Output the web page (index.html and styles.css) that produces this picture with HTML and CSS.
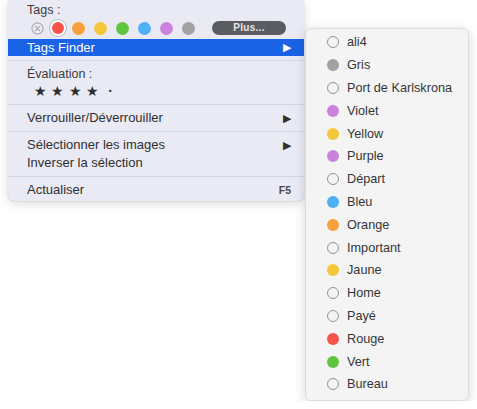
FILE: index.html
```html
<!DOCTYPE html>
<html lang="fr">
<head>
<meta charset="utf-8">
<title>Menu</title>
<link rel="stylesheet" href="styles.css">
</head>
<body>
<div class="stage">
  <div class="menu">
    <div class="label tags-label">Tags :</div>
    <div class="tag-row">
      <span class="clear"><svg width="13" height="13" viewBox="0 0 13 13"><circle cx="6.5" cy="6.5" r="5.6" fill="none" stroke="#a9a9ad" stroke-width="1.1"/><path d="M4.3 4.3 L8.7 8.7 M8.7 4.3 L4.3 8.7" stroke="#a9a9ad" stroke-width="1.1" stroke-linecap="round"/></svg></span>
      <span class="dot sel"><span class="inner red"></span></span>
      <span class="dot orange"></span>
      <span class="dot yellow"></span>
      <span class="dot green"></span>
      <span class="dot blue"></span>
      <span class="dot purple"></span>
      <span class="dot gray"></span>
      <span class="plus">Plus...</span>
    </div>
    <div class="item active"><span>Tags Finder</span><span class="arrow">&#9654;</span></div>
    <div class="sep"></div>
    <div class="label eval">Évaluation :</div>
    <div class="stars"><span>★</span><span>★</span><span>★</span><span>★</span><span class="dotc">·</span></div>
    <div class="sep"></div>
    <div class="item"><span>Verrouiller/Déverrouiller</span><span class="arrow">&#9654;</span></div>
    <div class="sep"></div>
    <div class="item"><span>Sélectionner les images</span><span class="arrow">&#9654;</span></div>
    <div class="item"><span>Inverser la sélection</span></div>
    <div class="sep"></div>
    <div class="item"><span>Actualiser</span><span class="key">F5</span></div>
  </div>
  <div class="submenu">
    <div class="sub"><span class="c ring"></span>ali4</div>
    <div class="sub"><span class="c gray"></span>Gris</div>
    <div class="sub"><span class="c ring"></span>Port de Karlskrona</div>
    <div class="sub"><span class="c purple"></span>Violet</div>
    <div class="sub"><span class="c yellow"></span>Yellow</div>
    <div class="sub"><span class="c purple"></span>Purple</div>
    <div class="sub"><span class="c ring"></span>Départ</div>
    <div class="sub"><span class="c blue"></span>Bleu</div>
    <div class="sub"><span class="c orange"></span>Orange</div>
    <div class="sub"><span class="c ring"></span>Important</div>
    <div class="sub"><span class="c yellow"></span>Jaune</div>
    <div class="sub"><span class="c ring"></span>Home</div>
    <div class="sub"><span class="c ring"></span>Payé</div>
    <div class="sub"><span class="c red"></span>Rouge</div>
    <div class="sub"><span class="c green"></span>Vert</div>
    <div class="sub"><span class="c ring"></span>Bureau</div>
  </div>
</div>
</body>
</html>
```

FILE: styles.css
```css
html, body {
  margin: 0;
  padding: 0;
  background: #ffffff;
}
body {
  font-family: "Liberation Sans", Arial, sans-serif;
  font-size: 13px;
  color: #333333;
}
.stage {
  display: flex;
  align-items: flex-start;
  padding-left: 8px;
  gap: 1px;
}
.menu {
  width: 296px;
  background: #e9eaf4;
  border-radius: 0 0 6px 6px;
  box-shadow: 0 3px 10px rgba(0,0,0,0.14), 0 0 1px rgba(0,0,0,0.25);
  padding-bottom: 2px;
}
.label {
  padding-left: 19px;
  color: #3a3a3c;
  font-size: 12.5px;
}
.tags-label {
  height: 19px;
  line-height: 20px;
}
.tag-row {
  height: 18px;
  display: flex;
  align-items: center;
  padding-left: 23px;
  margin-bottom: 2px;
}
.clear {
  width: 13px;
  height: 13px;
  display: flex;
  margin-right: 7px;
}
.dot {
  width: 13px;
  height: 13px;
  border-radius: 50%;
  margin-right: 9px;
  flex: none;
}
.dot.sel {
  width: 16px;
  height: 16px;
  margin-left: -1px;
  margin-right: 6px;
  background: #ffffff;
  box-shadow: 0 0 0 1px #b9b9c0;
  display: flex;
  align-items: center;
  justify-content: center;
}
.inner {
  width: 12px;
  height: 12px;
  border-radius: 50%;
}
.red { background: #f6534b; }
.orange { background: #f6a13c; }
.yellow { background: #f5c83c; }
.green { background: #5ec53f; }
.blue { background: #4eb1f6; }
.purple { background: #cb82df; }
.gray { background: #a1a1a3; }
.plus {
  margin-left: 8px;
  width: 74px;
  height: 14px;
  border-radius: 7px;
  background: #5b5c61;
  color: #e6e6ea;
  font-size: 10px;
  font-weight: bold;
  line-height: 14px;
  text-align: center;
  letter-spacing: 0.3px;
}
.item {
  height: 18px;
  line-height: 18px;
  padding-left: 19px;
  padding-right: 13px;
  display: flex;
  justify-content: space-between;
  color: #2f2f31;
}
.item.active {
  height: 17px;
  line-height: 17px;
  background: #1a63e6;
  color: #ffffff;
}
.arrow {
  font-size: 11px;
}
.key {
  font-size: 10.5px;
  font-weight: bold;
  color: #4a4a4c;
  padding-right: 0;
}
.sep {
  height: 1px;
  background: #d3d4de;
  margin: 4px 0 4px;
}
.eval {
  height: 18px;
  line-height: 18px;
}
.stars {
  height: 17px;
  line-height: 17px;
  padding-left: 26px;
  display: flex;
  font-size: 14px;
  color: #2f2f31;
}
.stars span {
  width: 17.3px;
}
.stars .dotc {
  padding-left: 5px;
  font-weight: bold;
}
.submenu {
  margin-top: 28px;
  width: 162px;
  background: #f4f4f4;
  border: 1px solid #dcdcdc;
  border-radius: 6px;
  box-shadow: 0 3px 12px rgba(0,0,0,0.16);
  padding: 2px 0 4px;
}
.sub {
  height: 22.8px;
  display: flex;
  align-items: center;
  padding-left: 21px;
  font-size: 12.7px;
  color: #343436;
}
.c {
  width: 12px;
  height: 12px;
  border-radius: 50%;
  margin-right: 8px;
  box-sizing: border-box;
  flex: none;
}
.c.ring {
  border: 1.8px solid #939396;
  background: transparent;
}
```
